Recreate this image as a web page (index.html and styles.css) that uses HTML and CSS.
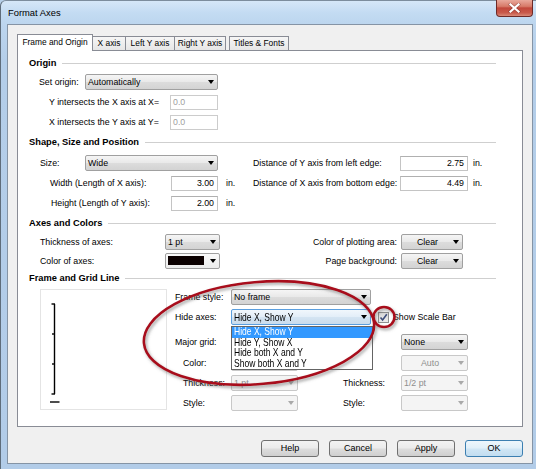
FILE: index.html
```html
<!DOCTYPE html>
<html>
<head>
<meta charset="utf-8">
<title>Format Axes</title>
<link rel="stylesheet" href="styles.css">
</head>
<body>
<div class="window">
  <div class="titlebar">
    <span class="title">Format Axes</span>
    <div class="close">
      <svg width="13" height="10" viewBox="0 0 13 10"><path d="M2.5 1.5 L10.5 8.5 M10.5 1.5 L2.5 8.5" stroke="#5a2020" stroke-width="3.6" stroke-linecap="square" opacity="0.35"/><path d="M2.5 1.5 L10.5 8.5 M10.5 1.5 L2.5 8.5" stroke="#ffffff" stroke-width="2.2" stroke-linecap="square"/></svg>
    </div>
  </div>

  <div class="client">
    <div class="tabs">
      <div class="tab sel t1">Frame and Origin</div>
      <div class="tab t2">X axis</div>
      <div class="tab t3">Left Y axis</div>
      <div class="tab t4">Right Y axis</div>
      <div class="tab t5">Titles &amp; Fonts</div>
    </div>

    <div class="panel">
      <!-- Origin -->
      <div class="head g1"><span>Origin</span><i></i></div>
      <div class="row">
        <span class="lbl w56 p10">Set origin:</span>
        <div class="combo c133"><span class="txt">Automatically</span><b class="arr"></b></div>
      </div>
      <div class="row">
        <span class="lbl w141 p20">Y intersects the X axis at X=</span>
        <div class="edit dis w48">0.0</div>
      </div>
      <div class="row">
        <span class="lbl w141 p20">X intersects the Y axis at Y=</span>
        <div class="edit dis w48">0.0</div>
      </div>

      <!-- Shape -->
      <div class="head g2"><span>Shape, Size and Position</span><i></i></div>
      <div class="grid2">
        <span class="lbl p11">Size:</span>
        <div class="combo span23"><span class="txt">Wide</span><b class="arr"></b></div>
        <span></span>
        <span class="lbl">Distance of Y axis from left edge:</span>
        <div class="edit num">2.75</div>
        <span class="lbl p5">in.</span>

        <span class="lbl span12 p21">Width (Length of X axis):</span>
        <div class="edit num">3.00</div>
        <span class="lbl p8">in.</span>
        <span class="lbl">Distance of X axis from bottom edge:</span>
        <div class="edit num">4.49</div>
        <span class="lbl p5">in.</span>

        <span class="lbl span12 p22">Height (Length of Y axis):</span>
        <div class="edit num">2.00</div>
        <span class="lbl p8">in.</span>
      </div>

      <!-- Axes and colors -->
      <div class="head g3"><span>Axes and Colors</span><i></i></div>
      <div class="grid3">
        <span class="lbl p11">Thickness of axes:</span>
        <div class="combo"><span class="txt">1 pt</span><b class="arr"></b></div>
        <span class="lbl right">Color of plotting area:</span>
        <span></span>
        <div class="combo"><span class="txt mid">Clear</span><b class="arr"></b></div>

        <span class="lbl p11">Color of axes:</span>
        <div class="combo colr"><span class="swatch"></span><span class="txt"></span><b class="arr"></b></div>
        <span class="lbl right">Page background:</span>
        <span></span>
        <div class="combo"><span class="txt mid">Clear</span><b class="arr"></b></div>
      </div>

      <!-- Frame and grid line -->
      <div class="head g4"><span>Frame and Grid Line</span><i></i></div>
      <div class="frame">
        <div class="preview">
          <svg width="125" height="119" viewBox="0 0 125 119">
            <g stroke="#000" stroke-width="1.4" fill="none">
              <path d="M13.5 14 V104"/>
              <path d="M10.5 14 H14"/>
              <path d="M11 44 H14"/>
              <path d="M11 74 H14"/>
              <path d="M10.5 104 H14"/>
              <path d="M9 112 H18.5"/>
            </g>
          </svg>
        </div>
        <div class="ctrls">
          <div class="crow">
            <span class="lbl w56">Frame style:</span>
            <div class="combo c140"><span class="txt">No frame</span><b class="arr"></b></div>
          </div>
          <div class="crow">
            <span class="lbl w56">Hide axes:</span>
            <div class="combo c140 focus"><span class="txt"><span class="nar">Hide X, Show Y</span></span><b class="arr"></b>
              <div class="list">
                <div class="item on"><span class="nar">Hide X, Show Y</span></div>
                <div class="item"><span class="nar">Hide Y, Show X</span></div>
                <div class="item"><span class="nar">Hide both X and Y</span></div>
                <div class="item"><span class="nar">Show both X and Y</span></div>
              </div>
            </div>
            <div class="check">
              <svg width="9" height="9" viewBox="0 0 9 9"><path d="M1.5 4.5 L3.6 7 L7.8 1.2" stroke="#3d4d7a" stroke-width="1.6" fill="none"/></svg>
            </div>
            <span class="lbl cbl">Show Scale Bar</span>
          </div>
          <div class="crow r3">
            <span class="lbl w226">Major grid:</span>
            <div class="combo c67"><span class="txt">None</span><b class="arr"></b></div>
          </div>
          <div class="crow r4">
            <span class="lbl w56 p8">Color:</span>
            <div class="combo c67 off"><span class="txt"></span><b class="arr"></b></div>
            <span class="sp103"></span>
            <div class="combo c67 off"><span class="txt mid">Auto</span><b class="arr"></b></div>
          </div>
          <div class="crow">
            <span class="lbl w56 p8">Thickness:</span>
            <div class="combo c67 off"><span class="txt">1 pt</span><b class="arr"></b></div>
            <span class="sp45"></span>
            <span class="lbl w58">Thickness:</span>
            <div class="combo c67 off"><span class="txt">1/2 pt</span><b class="arr"></b></div>
          </div>
          <div class="crow">
            <span class="lbl w56 p8">Style:</span>
            <div class="combo c67 off"><span class="txt"></span><b class="arr"></b></div>
            <span class="sp45"></span>
            <span class="lbl w58">Style:</span>
            <div class="combo c67 off"><span class="txt"></span><b class="arr"></b></div>
          </div>
        </div>
      </div>
    </div>

    <div class="buttons">
      <div class="btn">Help</div>
      <div class="btn">Cancel</div>
      <div class="btn">Apply</div>
      <div class="btn def">OK</div>
    </div>
  </div>

  <svg class="marks" width="536" height="469" viewBox="0 0 536 469">
    <defs>
      <filter id="sh" x="-10%" y="-20%" width="120%" height="140%">
        <feDropShadow dx="1.5" dy="2" stdDeviation="1.6" flood-color="#555" flood-opacity="0.55"/>
      </filter>
    </defs>
    <g fill="none" stroke="#a80e1c" stroke-width="2.6" filter="url(#sh)">
      <ellipse cx="259" cy="333" rx="115.5" ry="51" transform="rotate(-5 259 333)"/>
      <ellipse cx="384" cy="317" rx="10.5" ry="10"/>
    </g>
  </svg>
</div>
</body>
</html>
```

FILE: styles.css
```css
html, body {
  margin: 0;
  padding: 0;
}
body {
  width: 536px;
  height: 469px;
  overflow: hidden;
  font-family: "Liberation Sans", Arial, sans-serif;
  font-size: 8.8px;
  color: #000;
  background: #b6cfe9;
}

.window {
  position: relative;
  width: 536px;
  height: 469px;
  box-sizing: border-box;
  border-left: 1px solid #5f6d7b;
  border-top: 1px solid #7d8d9d;
  border-radius: 6px 0 0 0;
  background: linear-gradient(#d6e7f8, #c3dbf2 12px, #bcd5ee 24px, #b4cee9 60px, #b2cce8);
  display: flex;
  flex-direction: column;
}

.titlebar {
  height: 23px;
  display: flex;
  align-items: flex-start;
  flex: none;
}
.title {
  padding-left: 7px;
  line-height: 23px;
  font-size: 9.4px;
  color: #000;
}
.close {
  margin-left: auto;
  margin-right: 3px;
  margin-top: -1px;
  width: 37px;
  height: 17px;
  box-sizing: border-box;
  border: 1px solid #6e2a27;
  border-top: none;
  border-radius: 0 0 4px 4px;
  background: linear-gradient(#e9a99c, #d77a68 40%, #c2483b 50%, #c95a4b 80%, #d98a78);
  display: flex;
  align-items: center;
  justify-content: center;
}

.client {
  margin-left: 6px;
  width: 526px;
  height: 440px;
  box-sizing: border-box;
  border: 1px solid #8594a5;
  background: #f0f0f0;
  padding: 9px 9px 0 9px;
  flex: none;
}

.tabs {
  display: flex;
  align-items: flex-end;
  height: 16px;
}
.tab {
  box-sizing: border-box;
  height: 14px;
  border: 1px solid #898c95;
  border-bottom: none;
  margin-left: -1px;
  background: linear-gradient(#f6f6f6, #e6e6e6);
  font-size: 8.4px;
  line-height: 13px;
  text-align: center;
  white-space: nowrap;
}
.tab.sel {
  position: relative;
  z-index: 1;
  height: 17px;
  margin-bottom: -1px;
  margin-left: 0;
  background: #fff;
  line-height: 15px;
}
.t1 { width: 76px; }
.t2 { width: 34px; }
.t3 { width: 50px; }
.t4 { width: 52px; }
.t5 { width: 60px; margin-left: 3px; }

.panel {
  width: 506px;
  height: 377px;
  box-sizing: border-box;
  border: 1px solid #898c95;
  background: #fff;
  padding: 0 26px 0 11px;
}

.head {
  display: flex;
  align-items: center;
  height: 12px;
  font-weight: bold;
  font-size: 9.3px;
}
.head i {
  flex: 1;
  height: 1px;
  background: #cfcfcf;
  margin-left: 6px;
}
.g1 { margin-top: 6px; margin-bottom: 3px; }
.g2 { margin-top: 4px; margin-bottom: 5px; }
.g3 { margin-top: 4px; margin-bottom: 3px; }
.g4 { margin-top: 2px; }

.row {
  display: flex;
  align-items: center;
  height: 20px;
}

.lbl {
  box-sizing: border-box;
  white-space: nowrap;
}
.w56 { width: 56px; }
.w58 { width: 58px; }
.w141 { width: 141px; }
.w226 { width: 226px; }
.p5 { padding-left: 5px; }
.p8 { padding-left: 8px; }
.p10 { padding-left: 10px; }
.p11 { padding-left: 11px; }
.p20 { padding-left: 20px; }
.p21 { padding-left: 21px; }
.p22 { padding-left: 22px; }
.right { text-align: right; }

.combo {
  position: relative;
  box-sizing: border-box;
  height: 16px;
  border: 1px solid #a0a0a0;
  border-radius: 2px;
  background: linear-gradient(#f5f5f5, #e9e9e9 48%, #dcdcdc 52%, #d3d3d3);
  display: flex;
  align-items: center;
  white-space: nowrap;
}
.combo .txt {
  flex: 1;
  padding-left: 2px;
  overflow: hidden;
}
.combo .txt.mid {
  text-align: center;
  padding-left: 0;
}
.arr {
  width: 0;
  height: 0;
  border-left: 3.5px solid transparent;
  border-right: 3.5px solid transparent;
  border-top: 4px solid #000;
  margin-right: 3px;
  flex: none;
}
.c133 { width: 133px; }
.c140 { width: 140px; }
.c67 { width: 67px; }

.combo.off {
  border-color: #c8c8c8;
  background: #f4f4f4;
  color: #8e8e8e;
}
.combo.off .arr { border-top-color: #a9a9a9; }

.combo.focus {
  border-color: #5a9ede;
  background: linear-gradient(#f1f7fc, #e3eef8 48%, #d4e4f2 52%, #c9dced);
}
.combo.focus .txt { overflow: visible; }

.combo.colr {
  background: linear-gradient(#fafafa, #ececec);
}
.swatch {
  width: 36px;
  height: 9px;
  margin-left: 2px;
  background: #0b0000;
  flex: none;
}

.edit {
  box-sizing: border-box;
  height: 15px;
  border: 1px solid #c4c4c4;
  border-top-color: #b0b0b0;
  background: #fff;
  line-height: 13px;
  padding: 0 3px 0 2px;
  white-space: nowrap;
}
.edit.dis { color: #a0a0a0; border-color: #cccccc; }
.edit.num { text-align: right; }
.w48 { width: 48px; }

.grid2 {
  display: grid;
  grid-template-columns: 56px 86px 47px 35px 147px 68px auto;
  grid-auto-rows: 20px;
  align-items: center;
}
.span23 { grid-column: 2 / 4; }
.span12 { grid-column: 1 / 3; }

.grid3 {
  display: grid;
  grid-template-columns: 136px 55px 177px 4px 62px;
  grid-auto-rows: 19px;
  align-items: center;
}

.frame {
  display: flex;
  margin-top: 3px;
}
.preview {
  margin-left: 11px;
  margin-top: 2px;
  width: 127px;
  height: 121px;
  box-sizing: border-box;
  border: 1px solid #e4e4e4;
  background: #fff;
}
.preview svg { display: block; }

.ctrls {
  margin-left: 8px;
  display: flex;
  flex-direction: column;
}
.crow {
  display: flex;
  align-items: center;
  height: 20px;
}
.crow.r3 { margin-top: 5px; }
.crow.r4 { margin-top: 1px; }
.sp103 { width: 103px; }
.sp45 { width: 45px; }

.nar {
  display: inline-block;
  font-family: "Liberation Sans", Arial, sans-serif;
  font-size: 10.4px;
  transform: scaleX(0.82);
  transform-origin: 0 50%;
  white-space: nowrap;
}

.list {
  position: absolute;
  left: -1px;
  top: 16px;
  width: 142px;
  box-sizing: border-box;
  border: 1px solid #646464;
  background: #fff;
  z-index: 3;
  color: #000;
}
.item {
  height: 10.5px;
  line-height: 10.5px;
  padding-left: 2px;
  white-space: nowrap;
  overflow: hidden;
}
.item .nar { line-height: 10.5px; }
.item.on {
  background: #3399ff;
  color: #fff;
}

.check {
  margin-left: 7px;
  width: 11px;
  height: 11px;
  box-sizing: border-box;
  border: 1px solid #8e8f8f;
  background: linear-gradient(#d9d9d9, #ececec);
  display: flex;
  align-items: center;
  justify-content: center;
}
.check svg { display: block; }
.cbl { margin-left: 4px; }

.buttons {
  display: flex;
  justify-content: flex-end;
  gap: 10px;
  margin-top: 13px;
  width: 506px;
}
.btn {
  width: 58px;
  height: 17px;
  box-sizing: border-box;
  border: 1px solid #707070;
  border-radius: 3px;
  background: linear-gradient(#f3f3f3, #ebebeb 48%, #dddddd 52%, #cfcfcf);
  text-align: center;
  line-height: 15px;
  font-size: 9px;
}
.btn.def {
  border-color: #3c7fb1;
  background: linear-gradient(#edf6fc, #e0eff9 48%, #d0e6f5 52%, #c2ddf0);
}

.marks {
  position: absolute;
  left: -1px;
  top: -1px;
  pointer-events: none;
  z-index: 5;
}
```
